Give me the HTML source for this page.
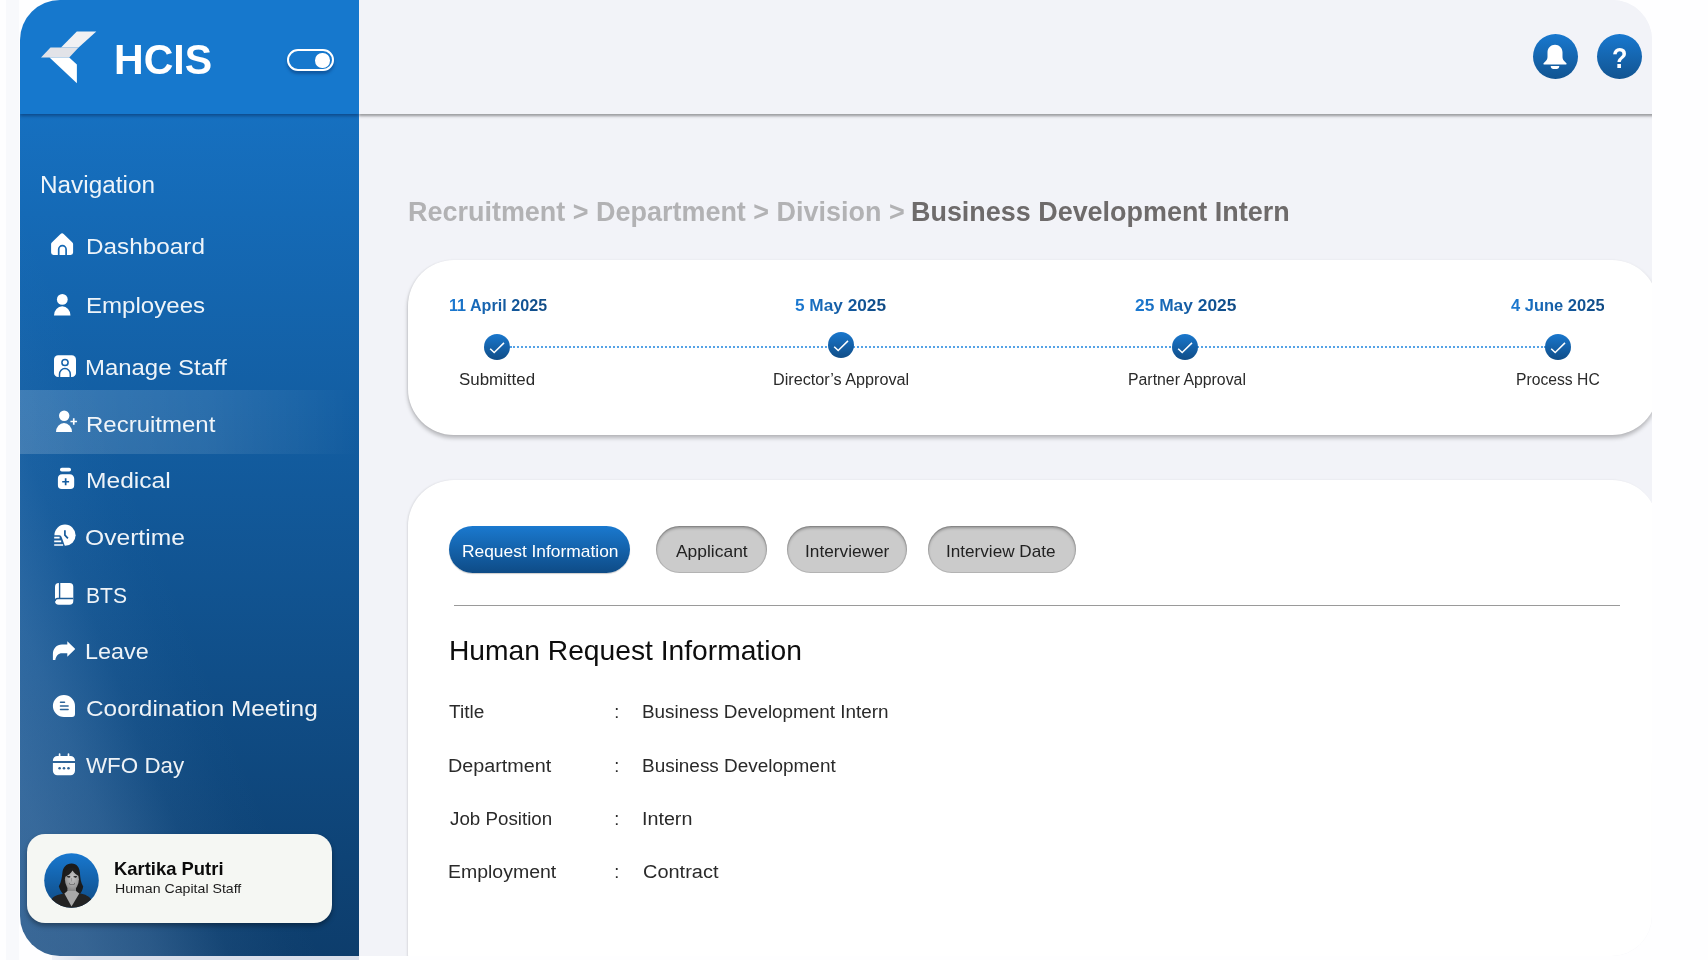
<!DOCTYPE html>
<html lang="en">
<head>
<meta charset="utf-8">
<title>HCIS - Recruitment</title>
<style>
*{box-sizing:border-box;margin:0;padding:0}
html,body{width:1708px;height:960px;overflow:hidden;background:#fefeff}
body{font-family:"Liberation Sans",sans-serif;position:relative;color:#111}
.abs,.t{position:absolute}
.t{white-space:nowrap;line-height:1;display:block}
#frame{position:absolute;left:20px;top:0;width:1632px;height:956px;border-radius:40px;overflow:hidden;background:#f2f3f8;}
/* everything inside frame uses page coordinates through #in */
#in{position:absolute;left:-20px;top:0;width:1708px;height:960px;will-change:transform}
#side{position:absolute;left:20px;top:114px;width:339px;height:842px;background:linear-gradient(to top right,rgba(150,190,235,.33) 0%,rgba(150,190,235,.30) 10%,rgba(150,190,235,.21) 20%,rgba(150,190,235,.06) 31%,rgba(150,190,235,.012) 40%,rgba(150,190,235,0) 45%),linear-gradient(to bottom,#1670c0,#0d3d6c)}
#sidehead{position:absolute;left:20px;top:0;width:339px;height:114px;background:#1678cd;box-shadow:0 2px 3px rgba(0,20,60,.40);clip-path:inset(0 0 -8px 0)}
#tophead{position:absolute;left:359px;top:0;width:1300px;height:114px;background:#f2f3f8;box-shadow:0 2px 2px rgba(0,0,0,.26),0 3px 3px rgba(0,0,0,.12);clip-path:inset(0 0 -8px 0)}
#active{position:absolute;left:20px;top:390px;width:339px;height:64px;background:linear-gradient(to right,rgba(255,255,255,.17),rgba(255,255,255,.10) 55%,rgba(255,255,255,0) 100%)}
.nav{color:rgba(255,255,255,.93);font-size:22px}
.ico{position:absolute;overflow:visible}
#user{position:absolute;left:27px;top:834px;width:305px;height:89px;border-radius:18px;background:#f5f7f3;box-shadow:0 3px 5px rgba(0,0,0,.35)}
.card{position:absolute;background:#fff}
#c1{left:408px;top:260px;width:1250px;height:175px;border-radius:46px;box-shadow:0 3px 4px rgba(0,0,0,.26),-1px 0 2px rgba(0,0,0,.06)}
#c2{left:408px;top:480px;width:1250px;height:520px;border-radius:46px;box-shadow:-1px 0 2px rgba(0,0,0,.10)}
.date{color:transparent;font-weight:bold;font-size:17px;background:linear-gradient(to right,#1b7ad3,#155fa8 45%,#0f4a84);-webkit-background-clip:text;background-clip:text;padding:2px 0}
.lab{color:#2a2a2a;font-size:16px}
.dot{position:absolute;width:26px;height:26px;border-radius:50%;background:linear-gradient(to bottom,#1977cd,#104d87)}
.dline{position:absolute;height:0;border-top:2px dotted #55a2e6}
.pill{position:absolute;top:526px;height:47px;border-radius:24px;background:#cbcbcb;box-shadow:inset 0 2px 3px rgba(0,0,0,.30),inset 0 0 0 1px rgba(0,0,0,.10)}
.pill.on{background:linear-gradient(to bottom,#1a79cf,#0e4b86);box-shadow:0 1px 1px rgba(0,0,0,.2)}
.pt{font-size:17px;color:#222}
.row{font-size:18px;color:#2a2a2a}
.rb{position:absolute;width:45.4px;height:45.4px;border-radius:50%;background:linear-gradient(to bottom,#1878cf,#125491)}
</style>
</head>
<body>
<div class="abs" style="left:6px;top:0;width:13px;height:960px;background:#f8f9fc"></div>
<div class="abs" style="left:52px;top:956px;width:307px;height:4px;background:linear-gradient(to right,#f1f3f9,#d9dfeb 30px)"></div>
<div id="frame"><div id="in">

<!-- top header -->
<div id="tophead"></div>
<div class="rb" style="left:1532.8px;top:34px"></div>
<div class="rb" style="left:1596.9px;top:34px"></div>
<svg class="ico" style="left:1532px;top:33.7px" width="46" height="46" viewBox="0 0 46 46"><path d="M23 10.8c-4.2 0-7.5 3.3-7.5 7.5v4.6c0 1.6-.8 3.2-2.2 4.6l-1.7 1.7c-.5.5-.1 1.3.6 1.3h21.6c.7 0 1.1-.8.6-1.3l-1.7-1.7c-1.4-1.4-2.2-3-2.2-4.6v-4.6c0-4.2-3.3-7.5-7.5-7.5z" fill="#fff"/><path d="M18.7 31.9h8.6a4.3 3.2 0 0 1-8.6 0z" fill="#fff"/></svg>
<span class="t" id="q" style="left:1612.4px;top:43.4px;font-size:29.3px;font-weight:bold;color:#fff;transform:scaleX(.86);transform-origin:0 50%">?</span>

<!-- sidebar -->
<div id="side"></div>
<div id="sidehead"></div>
<div id="active"></div>

<svg class="ico" style="left:30px;top:20px" width="80" height="70" viewBox="30 20 80 70"><polygon points="76.8,31.5 96.3,31.5 78.6,47.5 61,47.5" fill="#f1f1f3"/><polygon points="50.5,47.5 78.6,47.5 69.2,57.5 41,57.5" fill="#e2e3e8"/><polygon points="49.5,57.5 69.2,57.5 76.9,64.5 76.9,83.3" fill="#fff"/></svg>
<span class="t" id="hcis" style="left:113.5px;top:38.5px;font-size:42px;font-weight:bold;color:#fff;transform:scaleX(0.9780);transform-origin:0 50%">HCIS</span>
<div class="abs" style="left:286.6px;top:49.3px;width:47.6px;height:22.2px;border:2.8px solid #fff;border-radius:11px;box-shadow:0 3px 3px rgba(0,30,80,.35)"></div>
<div class="abs" style="left:315.4px;top:53.2px;width:14.4px;height:14.4px;border-radius:50%;background:#fff"></div>

<span class="t nav" id="n0" style="left:39.7px;top:174.2px;font-size:23px;transform:scaleX(1.0577);transform-origin:0 50%">Navigation</span>
<span class="t nav" id="n1" style="left:85.7px;top:236.3px;transform:scaleX(1.1049);transform-origin:0 50%">Dashboard</span>
<span class="t nav" id="n2" style="left:85.8px;top:294.8px;transform:scaleX(1.0944);transform-origin:0 50%">Employees</span>
<span class="t nav" id="n3" style="left:84.8px;top:357.1px;transform:scaleX(1.0876);transform-origin:0 50%">Manage Staff</span>
<span class="t nav" id="n4" style="left:85.8px;top:413.8px;transform:scaleX(1.0902);transform-origin:0 50%">Recruitment</span>
<span class="t nav" id="n5" style="left:85.7px;top:470.4px;transform:scaleX(1.1169);transform-origin:0 50%">Medical</span>
<span class="t nav" id="n6" style="left:85.4px;top:527.4px;transform:scaleX(1.1186);transform-origin:0 50%">Overtime</span>
<span class="t nav" id="n7" style="left:86.1px;top:584.7px;transform:scaleX(0.9585);transform-origin:0 50%">BTS</span>
<span class="t nav" id="n8" style="left:85.3px;top:641.0px;transform:scaleX(1.0638);transform-origin:0 50%">Leave</span>
<span class="t nav" id="n9" style="left:86.1px;top:698.1px;transform:scaleX(1.1081);transform-origin:0 50%">Coordination Meeting</span>
<span class="t nav" id="n10" style="left:86.0px;top:755.0px;transform:scaleX(1.0167);transform-origin:0 50%">WFO Day</span>

<svg class="ico" style="left:40px;top:225px" width="60" height="40" viewBox="0 0 60 40"><path d="M20.3 9.2a2.5 2.5 0 0 1 3.6 0l8.5 8.2a2.4 2.4 0 0 1 .7 1.7v8.5a2.4 2.4 0 0 1-2.4 2.4h-17.2a2.4 2.4 0 0 1-2.4-2.4v-8.5a2.4 2.4 0 0 1 .7-1.7z" fill="#fff"/><path d="M18.7 30v-5.6a3.7 3.7 0 0 1 7.4 0v5.6" fill="none" stroke="#1568b4" stroke-width="1.7"/></svg>
<svg class="ico" style="left:40px;top:285px" width="60" height="40" viewBox="0 0 60 40"><circle cx="22.3" cy="14.4" r="5.4" fill="#fff"/><path d="M14 30.4a8.25 9.2 0 0 1 16.5 0z" fill="#fff"/></svg>
<svg class="ico" style="left:40px;top:345px" width="60" height="40" viewBox="0 0 60 40"><rect x="14" y="10.2" width="22" height="21.9" rx="4.2" fill="#fff"/><circle cx="25" cy="17.5" r="3.1" fill="none" stroke="#1562aa" stroke-width="1.5"/><path d="M19.5 32.1v-2.9a5.4 5.6 0 0 1 10.8 0v2.9" fill="none" stroke="#1562aa" stroke-width="1.5"/></svg>
<svg class="ico" style="left:40px;top:400px" width="60" height="40" viewBox="0 0 60 40"><circle cx="24.2" cy="15.8" r="5.2" fill="#fff"/><path d="M16 32a8 8.9 0 0 1 16 0z" fill="#fff"/><path d="M33.75 18.2v6.6M30.45 21.5h6.6" stroke="#fff" stroke-width="1.7" fill="none"/></svg>
<svg class="ico" style="left:40px;top:458px" width="60" height="40" viewBox="0 0 60 40"><rect x="20" y="9.8" width="11" height="3.8" rx="1.8" fill="#fff"/><path d="M22.2 16.25h7.6a4.4 4.4 0 0 1 4.4 4.4v6.6a3.8 3.8 0 0 1-3.8 3.8h-8.7a3.8 3.8 0 0 1-3.8-3.8v-6.6a4.4 4.4 0 0 1 4.3-4.4z" fill="#fff"/><path d="M25.65 20.3v6.9M22.2 23.75h6.9" stroke="#145c9f" stroke-width="1.7" fill="none"/></svg>
<svg class="ico" style="left:40px;top:515px" width="60" height="40" viewBox="0 0 60 40"><circle cx="25" cy="20.2" r="10.6" fill="#fff"/><path d="M24.9 15.2v5l3 3.2" fill="none" stroke="#165a9a" stroke-width="1.7"/><path d="M13 20.2h6.2c1.6 0 2.4 1.4 2.7 2.5l3.3 9.3h-12.2z" fill="#1f5f9c"/><path d="M14.2 22.6h5.4M14.2 26.35h7M14.2 30h8.9" stroke="#fff" stroke-width="1.6" fill="none"/></svg>
<svg class="ico" style="left:40px;top:572px" width="60" height="40" viewBox="0 0 60 40"><rect x="15" y="11" width="18.3" height="21.7" rx="3.8" fill="#fff"/><path d="M19.6 11v15.5h13.7M19.6 26.5h-1.8a2.8 2.8 0 0 0-2.8 2.8" fill="none" stroke="#1d5d99" stroke-width="1.4"/></svg>
<svg class="ico" style="left:40px;top:630px" width="60" height="40" viewBox="0 0 60 40"><path d="M27.3 11.3l7.5 7.2a.7.7 0 0 1 0 1l-7.5 7.2v-3.4h-5.3c-3.6 0-5.9 2.5-6.7 6.7h-2.4v-6c0-5.2 3.7-9.4 9.1-9.4h5.3z" fill="#fff"/></svg>
<svg class="ico" style="left:40px;top:687px" width="60" height="40" viewBox="0 0 60 40"><path d="M23.95 7.9a11.05 11.05 0 0 1 11.05 11.05v8.05a3 3 0 0 1-3 3h-8.05a11.05 11.05 0 0 1 0-22.1z" fill="#fff"/><path d="M20.5 15.2h4M20.5 19h7.6M20.5 22.5h7.6" stroke="#2c6499" stroke-width="1.5" stroke-linecap="round" fill="none"/></svg>
<svg class="ico" style="left:40px;top:744px" width="60" height="40" viewBox="0 0 60 40"><path d="M19.6 10v3M28.5 10v3" stroke="#fff" stroke-width="1.7" stroke-linecap="round" fill="none"/><path d="M17.4 11.9h13.1a4.5 4.5 0 0 1 4.5 4.5v.7h-22.1v-.7a4.5 4.5 0 0 1 4.5-4.5z" fill="#fff"/><path d="M12.9 19h22.1v7.75a4.5 4.5 0 0 1-4.5 4.5h-13.1a4.5 4.5 0 0 1-4.5-4.5z" fill="#fff"/><circle cx="19.6" cy="24.2" r="1.3" fill="#2d6397"/><circle cx="24" cy="24.2" r="1.3" fill="#2d6397"/><circle cx="28.5" cy="24.2" r="1.3" fill="#2d6397"/></svg>

<div id="user"></div>
<svg class="ico" style="left:43.9px;top:852.7px" width="55" height="55" viewBox="0 0 55 55"><defs><linearGradient id="avg" x1="0" y1="0" x2="0" y2="1"><stop offset="0" stop-color="#1878cf"/><stop offset="1" stop-color="#0f4a83"/></linearGradient><radialGradient id="avf" cx=".55" cy=".4" r=".7"><stop offset="0" stop-color="#c4c4c4"/><stop offset=".6" stop-color="#a2a2a2"/><stop offset="1" stop-color="#7c7c7c"/></radialGradient><clipPath id="avc"><circle cx="27.5" cy="27.5" r="27.3"/></clipPath></defs><circle cx="27.5" cy="27.5" r="27.3" fill="url(#avg)"/><g clip-path="url(#avc)"><path d="M27.6 10.6c-5.6 0-8.6 4-9.2 9-.6 5-.9 9.4-3.6 13.6 1.2 4 2.8 6.6 5.4 8.6h14.6c2.6-2.2 3.8-5 4.4-8.4-2.6-4-2.9-8.6-3.3-13.6-.4-5.2-3-9.2-8.3-9.2z" fill="#1b1b1b"/><path d="M23.4 33h8.6v9h-8.6z" fill="#8a8a8a"/><ellipse cx="27.9" cy="26.3" rx="7" ry="10.8" fill="url(#avf)"/><path d="M20.6 24c.2-5.6 3-9.6 7.8-9.4 3.8.2 6 3.4 6.6 8.4-2.8-1-5-3-6.4-5.4-1.8 2.8-4.6 5.4-8 6.4z" fill="#1e1e1e"/><path d="M22.8 23.6h3.4M29.6 23.6h3.4" stroke="#3a3a3a" stroke-width="1.1" fill="none"/><path d="M24.3 24.1h1.4M30.7 24.1h1.4" stroke="#1a1a1a" stroke-width="1" fill="none"/><path d="M27.6 25v3.4" stroke="#8e8e8e" stroke-width=".8" fill="none"/><path d="M25.2 30.3c1.6 1.1 4 1.1 5.6 0" stroke="#5a5a5a" stroke-width="1.5" fill="none"/><path d="M25.8 30.4c1.3.6 3.1.6 4.4 0" stroke="#dcdcdc" stroke-width=".8" fill="none"/><path d="M7 47c2-4 6.6-5.6 13-6.6l7.6 2 8-2.2c5.4 1 10 3 12 7v10h-40.6z" fill="#232323"/><path d="M20.4 40.6l7.1 12.9 7.8-13-3.3-2.5h-8.6z" fill="#a8a8a8"/></g></svg>
<span class="t" id="u1" style="left:113.9px;top:861.4px;font-size:17.7px;font-weight:bold;color:#0b0b0b;transform:scaleX(1.0414);transform-origin:0 50%">Kartika Putri</span>
<span class="t" id="u2" style="left:114.5px;top:881.8px;font-size:13.2px;color:#1a1a1a;transform:scaleX(1.0724);transform-origin:0 50%">Human Capital Staff</span>

<!-- breadcrumb -->
<span class="t" id="bc1" style="left:407.7px;top:199.1px;font-size:27px;font-weight:bold;color:#b2b2b4;transform:scaleX(0.9985);transform-origin:0 50%">Recruitment &gt; Department &gt; Division &gt;</span>
<span class="t" id="bc2" style="left:911.2px;top:199.1px;font-size:27px;font-weight:bold;color:#6e6b6b;transform:scaleX(0.9974);transform-origin:0 50%">Business Development Intern</span>

<!-- timeline card -->
<div class="card" id="c1"></div>
<span class="t date" id="d1" style="left:448.5px;top:295.3px;transform:scaleX(0.9497);transform-origin:0 50%">11 April 2025</span>
<span class="t date" id="d2" style="left:794.7px;top:295.3px;transform:scaleX(1.0132);transform-origin:0 50%">5 May 2025</span>
<span class="t date" id="d3" style="left:1134.6px;top:295.3px;transform:scaleX(1.0219);transform-origin:0 50%">25 May 2025</span>
<span class="t date" id="d4" style="left:1510.9px;top:295.3px;transform:scaleX(0.9707);transform-origin:0 50%">4 June 2025</span>
<div class="dline" style="left:510px;top:345.7px;width:1036px"></div>
<div class="dot" style="left:484px;top:334.3px"></div>
<div class="dot" style="left:828px;top:331.8px"></div>
<div class="dot" style="left:1172px;top:334.3px"></div>
<div class="dot" style="left:1544.7px;top:334.3px"></div>
<svg class="ico" style="left:484px;top:334.3px" width="26" height="26" viewBox="0 0 26 26"><path d="M6.2 14.7l4 3.8 9.8-9.6" fill="none" stroke="#fff" stroke-width="1.5"/></svg>
<svg class="ico" style="left:828px;top:331.8px" width="26" height="26" viewBox="0 0 26 26"><path d="M6.2 14.7l4 3.8 9.8-9.6" fill="none" stroke="#fff" stroke-width="1.5"/></svg>
<svg class="ico" style="left:1172px;top:334.3px" width="26" height="26" viewBox="0 0 26 26"><path d="M6.2 14.7l4 3.8 9.8-9.6" fill="none" stroke="#fff" stroke-width="1.5"/></svg>
<svg class="ico" style="left:1544.7px;top:334.3px" width="26" height="26" viewBox="0 0 26 26"><path d="M6.2 14.7l4 3.8 9.8-9.6" fill="none" stroke="#fff" stroke-width="1.5"/></svg>
<span class="t lab" id="l1" style="left:459.1px;top:371.6px;transform:scaleX(1.0552);transform-origin:0 50%">Submitted</span>
<span class="t lab" id="l2" style="left:772.9px;top:371.6px;transform:scaleX(1.0119);transform-origin:0 50%">Director’s Approval</span>
<span class="t lab" id="l3" style="left:1127.5px;top:371.6px;transform:scaleX(0.9892);transform-origin:0 50%">Partner Approval</span>
<span class="t lab" id="l4" style="left:1515.9px;top:371.6px;transform:scaleX(0.9808);transform-origin:0 50%">Process HC</span>

<!-- detail card -->
<div class="card" id="c2"></div>
<div class="pill on" style="left:449px;width:181px"></div>
<div class="pill" style="left:655.5px;width:111px"></div>
<div class="pill" style="left:787px;width:120px"></div>
<div class="pill" style="left:927.5px;width:148px"></div>
<span class="t pt" id="p1" style="left:461.6px;top:542.8px;color:#fff;transform:scaleX(1.0220);transform-origin:0 50%">Request Information</span>
<span class="t pt" id="p2" style="left:676.2px;top:542.8px;transform:scaleX(1.0248);transform-origin:0 50%">Applicant</span>
<span class="t pt" id="p3" style="left:805.4px;top:542.8px;transform:scaleX(1.0146);transform-origin:0 50%">Interviewer</span>
<span class="t pt" id="p4" style="left:945.9px;top:542.8px;transform:scaleX(1.0078);transform-origin:0 50%">Interview Date</span>
<div class="abs" style="left:454px;top:604.6px;width:1166px;height:1.6px;background:#9a9a9a"></div>
<span class="t" id="h2" style="left:448.5px;top:636.7px;font-size:28px;color:#0d0d0d;transform:scaleX(1.0076);transform-origin:0 50%">Human Request Information</span>
<span class="t row" id="r1a" style="left:449.2px;top:703.1px;transform:scaleX(1.0567);transform-origin:0 50%">Title</span>
<span class="t row" style="left:614.2px;top:703px">:</span>
<span class="t row" id="r1b" style="left:642.0px;top:703.1px;transform:scaleX(1.0485);transform-origin:0 50%">Business Development Intern</span>
<span class="t row" id="r2a" style="left:448.1px;top:756.9px;transform:scaleX(1.0972);transform-origin:0 50%">Department</span>
<span class="t row" style="left:614.2px;top:756.5px">:</span>
<span class="t row" id="r2b" style="left:642.0px;top:756.9px;transform:scaleX(1.0521);transform-origin:0 50%">Business Development</span>
<span class="t row" id="r3a" style="left:449.6px;top:810.4px;transform:scaleX(1.0420);transform-origin:0 50%">Job Position</span>
<span class="t row" style="left:614.2px;top:809.7px">:</span>
<span class="t row" id="r3b" style="left:641.7px;top:810.4px;transform:scaleX(1.0945);transform-origin:0 50%">Intern</span>
<span class="t row" id="r4a" style="left:448.1px;top:862.9px;transform:scaleX(1.0818);transform-origin:0 50%">Employment</span>
<span class="t row" style="left:614.2px;top:863px">:</span>
<span class="t row" id="r4b" style="left:642.6px;top:862.9px;transform:scaleX(1.1087);transform-origin:0 50%">Contract</span>

</div></div>
</body>
</html>
